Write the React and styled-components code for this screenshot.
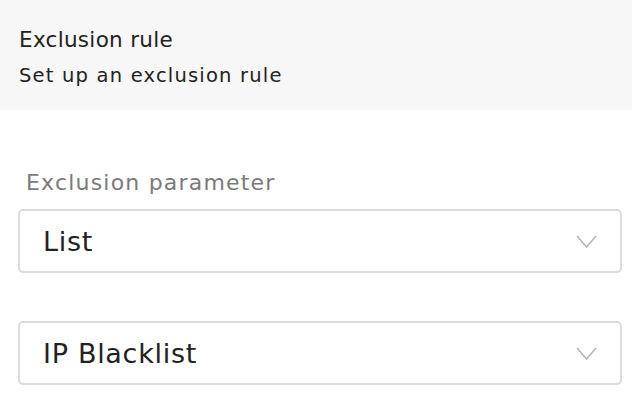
import styled, { createGlobalStyle } from 'styled-components'

const GlobalStyle = createGlobalStyle`
  body {
    margin: 0;
    background: #fff;
    font-family: 'DejaVu Sans', 'Open Sans', sans-serif;
  }
`

const Page = styled.div`
  width: 632px;
  height: 408px;
  overflow: hidden;
`

const Header = styled.div`
  background: #f7f7f7;
  height: 110px;
  box-sizing: border-box;
  padding: 26px 0 0 19px;
`

const Title = styled.div`
  font-size: 21.5px;
  letter-spacing: 0.3px;
  color: #222;
  line-height: 28px;
`

const Subtitle = styled.div`
  font-size: 19.5px;
  letter-spacing: 1.2px;
  color: #222;
  line-height: 22px;
  margin-top: 11px;
`

const Body = styled.div`
  padding: 61px 10px 0 18px;
  display: flex;
  flex-direction: column;
`

const Label = styled.div`
  font-size: 22px;
  letter-spacing: 1.2px;
  color: #7a7a7a;
  line-height: 24px;
  padding-left: 8px;
  margin-bottom: 14px;
`

const Field = styled.div`
  margin-bottom: ${(p) => p.gap || 0}px;
`

const Select = styled.div`
  height: 64px;
  box-sizing: border-box;
  border: 2px solid #dcdcdc;
  border-radius: 5px;
  display: flex;
  align-items: center;
  justify-content: space-between;
  padding: 0 23px 0 23px;
  font-size: 27px;
  letter-spacing: 0.7px;
  color: #222;
`

const Chevron = () => (
  <svg width="21" height="15" viewBox="0 0 21 15" fill="none">
    <path d="M1 2l9.5 11L20 2" stroke="#b5b5b5" strokeWidth="1.6" />
  </svg>
)

export default function App() {
  return (
    <Page>
      <GlobalStyle />
      <Header>
        <Title>Exclusion rule</Title>
        <Subtitle>Set up an exclusion rule</Subtitle>
      </Header>
      <Body>
        <Label>Exclusion parameter</Label>
        <Field gap={48}>
          <Select>
            <span>List</span>
            <Chevron />
          </Select>
        </Field>
        <Field>
          <Select>
            <span>IP Blacklist</span>
            <Chevron />
          </Select>
        </Field>
      </Body>
    </Page>
  )
}
